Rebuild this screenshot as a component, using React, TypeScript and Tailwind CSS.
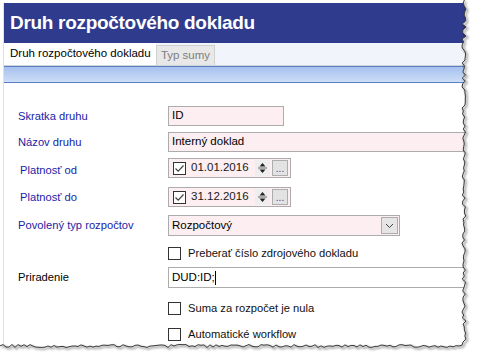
import React from "react";

const FONT = "font-['Liberation_Sans',Arial,sans-serif]";

function rng(seed: number) {
  let s = seed;
  return () => {
    s = (s * 1103515245 + 12345) % 2147483648;
    return s / 2147483648;
  };
}

function TornEdge() {
  const r = rng(7);
  const pts: string[] = [];
  for (let y = 0; y <= 344; y += 3) pts.push(`${464 + r() * 4 - 2},${y}`);
  for (let x = 462; x >= 0; x -= 3) pts.push(`${x},${346 + r() * 3 - 1.5}`);
  const edge = pts.join(" ");
  return (
    <svg className="absolute inset-0 pointer-events-none" width="478" height="360">
      <defs>
        <filter id="sh" x="-10%" y="-10%" width="120%" height="120%">
          <feGaussianBlur stdDeviation="1.2" />
        </filter>
      </defs>
      <polygon points={`478,0 ${edge} 0,360 478,360`} fill="#fff" />
      <polyline points={edge} fill="none" stroke="#000" strokeWidth="2" opacity="0.35" filter="url(#sh)" transform="translate(1.5,1.5)" />
      <polyline points={edge} fill="none" stroke="#3a3a3a" strokeWidth="1" />
    </svg>
  );
}

function Label({ children, blue = true }: { children?: React.ReactNode; blue?: boolean }) {
  return (
    <div className={`w-[164px] shrink-0 pl-[14px] text-[11.2px] whitespace-nowrap ${blue ? "text-[#1c1ca8]" : "text-black"}`}>
      {children}
    </div>
  );
}

function Check({ checked = false }: { checked?: boolean }) {
  return (
    <div className="w-[13px] h-[13px] shrink-0 border border-[#333] bg-white flex items-center justify-center">
      {checked && (
        <svg width="11" height="11" viewBox="0 0 11 11">
          <path d="M1.5 5.5 L4.2 8.2 L9.5 2.5" fill="none" stroke="#444" strokeWidth="1.2" />
        </svg>
      )}
    </div>
  );
}

function DateBox({ value }: { value: string }) {
  return (
    <div className="w-[123px] h-[20px] border border-[#acacac] bg-[#fdeef1] flex items-center pl-[4px]">
      <Check checked />
      <span className="ml-[5px] text-[11.5px] text-[#1a1a1a]">{value}</span>
      <div className="ml-auto mr-[2px] flex items-center gap-[2px]">
        <div className="w-[15px] h-[16px] bg-[#eeeeee]">
          <svg width="15" height="16" viewBox="0 0 15 16">
            <path d="M7.5 3 L10.5 6.5 L4.5 6.5 Z" fill="#222" />
            <line x1="3" y1="8" x2="12" y2="8" stroke="#666" strokeWidth="1" />
            <path d="M4.5 9.5 L10.5 9.5 L7.5 13 Z" fill="#222" />
          </svg>
        </div>
        <div className="w-[16px] h-[16px] border border-[#adadad] bg-[#e3e3e3] text-[10px] leading-[12px] text-[#3b3b8f] flex items-end justify-center">
          ...
        </div>
      </div>
    </div>
  );
}

export default function App() {
  return (
    <div className={`relative w-[478px] h-[360px] bg-white overflow-hidden ${FONT}`}>
      <div className="ml-[3px] mt-[3px] w-[472px] h-[357px] border-l border-[#e2e2e2] flex flex-col">
        <div className="h-[40px] bg-[#2f3b8d] pl-[6px] flex items-center text-white font-bold text-[19px] tracking-[-0.3px] whitespace-nowrap">
          Druh rozpočtového dokladu
        </div>
        <div className="h-[23px] bg-[#f1f4fa] flex items-end border-b border-[#cfd3da]">
          <div className="h-full w-[152px] bg-white pl-[6px] flex items-center text-[11.5px] text-black whitespace-nowrap">
            Druh rozpočtového dokladu
          </div>
          <div className="h-[20px] w-[59px] bg-[#e8e8e8] border border-[#d0d0d0] border-b-0 flex items-center justify-center text-[11.5px] text-[#7e7e7e] whitespace-nowrap">
            Typ sumy
          </div>
        </div>
        <div className="h-[17px] border-y border-[#5b7fc0] bg-gradient-to-b from-[#a6c1ee] to-[#cddef7]" />
        <div className="flex flex-col pt-[23px]">
          <div className="flex items-center h-[20px]">
            <Label>Skratka druhu</Label>
            <div className="w-[116px] h-[20px] border border-[#acacac] bg-[#fdeef1] pl-[3px] flex items-center text-[11.5px]">ID</div>
          </div>
          <div className="flex items-center h-[20px] mt-[6px]">
            <Label>Názov druhu</Label>
            <div className="flex-1 h-[20px] border border-[#acacac] bg-[#fdeef1] pl-[3px] flex items-center text-[11.5px]">Interný doklad</div>
          </div>
          <div className="flex items-center h-[20px] mt-[6px]">
            <Label>
              <span className="ml-[2px] relative top-[2px]">Platnosť od</span>
            </Label>
            <DateBox value="01.01.2016" />
          </div>
          <div className="flex items-center h-[20px] mt-[9px]">
            <Label>
              <span className="ml-[2px]">Platnosť do</span>
            </Label>
            <DateBox value="31.12.2016" />
          </div>
          <div className="flex items-center h-[21px] mt-[8px]">
            <Label>Povolený typ rozpočtov</Label>
            <div className="w-[232px] h-[21px] border border-[#acacac] bg-[#fdeef1] pl-[3px] flex items-center text-[11.5px]">
              Rozpočtový
              <div className="ml-auto mr-[1px] w-[17px] h-[17px] border border-[#adadad] bg-[#e5e5e5] flex items-center justify-center">
                <svg width="9" height="6" viewBox="0 0 9 6">
                  <path d="M1 1 L4.5 4.5 L8 1" fill="none" stroke="#444" strokeWidth="1" />
                </svg>
              </div>
            </div>
          </div>
          <div className="flex items-center h-[14px] mt-[10px]">
            <Label />
            <Check />
            <span className="ml-[7px] text-[11.2px] text-[#111]">Preberať číslo zdrojového dokladu</span>
          </div>
          <div className="flex items-center h-[21px] mt-[7px]">
            <Label blue={false}>Priradenie</Label>
            <div className="flex-1 h-[21px] border border-[#acacac] bg-white pl-[3px] flex items-center text-[11.5px]">
              DUD:ID;<span className="w-px h-[14px] bg-black" />
            </div>
          </div>
          <div className="flex items-center h-[14px] mt-[13px]">
            <Label />
            <Check />
            <span className="ml-[7px] text-[11.2px] text-[#111]">Suma za rozpočet je nula</span>
          </div>
          <div className="flex items-center h-[14px] mt-[12px]">
            <Label />
            <Check />
            <span className="ml-[7px] text-[11.2px] text-[#111]">Automatické workflow</span>
          </div>
        </div>
      </div>
      <TornEdge />
    </div>
  );
}
